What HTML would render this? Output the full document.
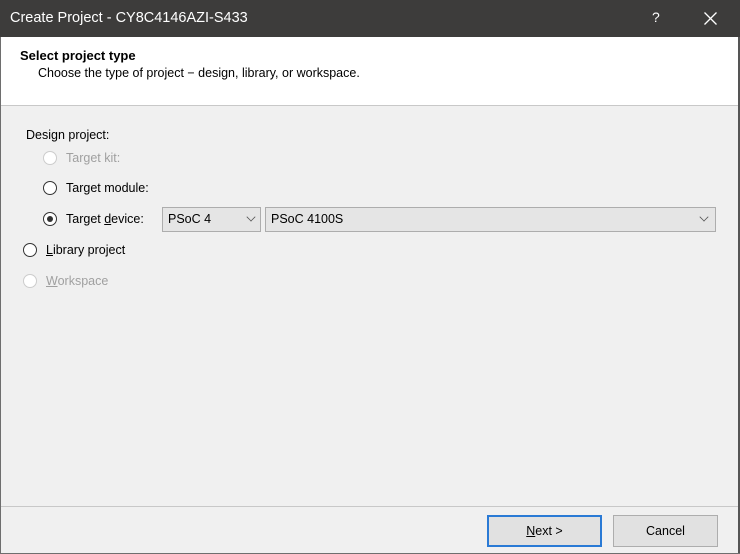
<!DOCTYPE html>
<html><head><meta charset="utf-8"><style>
*{margin:0;padding:0;box-sizing:border-box}
body{width:740px;height:554px;overflow:hidden;background:#f0f0f0;font-family:"Liberation Sans",sans-serif;font-size:12px;color:#000;position:relative}
.abs{position:absolute}
.title{left:0;top:0;width:740px;height:37px;background:#3d3c3b;color:#fff;font-size:14.5px;line-height:37px;padding-left:10px}
.hdr{left:0;top:37px;width:740px;height:69px;background:#fff;border-bottom:1px solid #c8c8c8}
.lb{left:0;top:37px;width:1px;height:517px;background:#6e6e6e}
.rb{right:0;top:37px;width:2px;height:517px;background:#555}
.bb{left:0;bottom:0;width:740px;height:1px;background:#6e6e6e}
.radio{width:14px;height:14px;border:1px solid #333;border-radius:50%;background:#fff}
.radio.dis{border-color:#ccc}
.radio.on::after{content:"";position:absolute;left:3px;top:3px;width:6px;height:6px;border-radius:50%;background:#333}
.t{font-size:12.5px;white-space:nowrap}
.dis-t{color:#a0a0a0}
.combo{height:25px;background:#e5e5e5;border:1px solid #adadad;font-size:12.5px;line-height:23px;padding-left:5px}
.chev{position:absolute;top:5px;width:8px;height:8px;border-right:1.3px solid #555;border-bottom:1.3px solid #555;transform:rotate(45deg) scale(.8)}
.btn{height:32px;background:#e1e1e1;border:1px solid #adadad;text-align:center;line-height:30px;font-size:12.5px}
</style></head><body>
<div class="abs title">Create Project - CY8C4146AZI-S433</div>
<div class="abs" style="left:652px;top:9px;color:#fff;font-size:14px">?</div>
<svg class="abs" style="left:704px;top:12px" width="13" height="13"><path d="M0.5 0.5L12.5 12.5M12.5 0.5L0.5 12.5" stroke="#fff" stroke-width="1.3"/></svg>
<div class="abs hdr"></div>
<div class="abs" style="left:20px;top:48px;font-weight:bold;font-size:13px">Select project type</div>
<div class="abs t" style="left:38px;top:66px">Choose the type of project − design, library, or workspace.</div>
<div class="abs lb"></div><div class="abs rb"></div><div class="abs bb"></div>

<div class="abs t" style="left:26px;top:128px">Design project:</div>
<div class="abs radio dis" style="left:43px;top:151px"></div>
<div class="abs t dis-t" style="left:66px;top:151px">Target kit:</div>
<div class="abs radio" style="left:43px;top:181px"></div>
<div class="abs t" style="left:66px;top:181px">Target module:</div>
<div class="abs radio on" style="left:43px;top:212px"></div>
<div class="abs t" style="left:66px;top:212px">Target <u>d</u>evice:</div>
<div class="abs combo" style="left:162px;top:207px;width:99px">PSoC 4<span class="chev" style="left:84px"></span></div>
<div class="abs combo" style="left:265px;top:207px;width:451px">PSoC 4100S<span class="chev" style="left:434px"></span></div>
<div class="abs radio" style="left:23px;top:243px"></div>
<div class="abs t" style="left:46px;top:243px"><u>L</u>ibrary project</div>
<div class="abs radio dis" style="left:23px;top:274px"></div>
<div class="abs t dis-t" style="left:46px;top:274px"><u>W</u>orkspace</div>

<div class="abs" style="left:1px;top:506px;width:737px;height:1px;background:#c8c8c8"></div>
<div class="abs btn" style="left:487px;top:515px;width:115px;border:2px solid #2a7ad5;line-height:28px"><u>N</u>ext &gt;</div>
<div class="abs btn" style="left:613px;top:515px;width:105px">Cancel</div>
</body></html>
